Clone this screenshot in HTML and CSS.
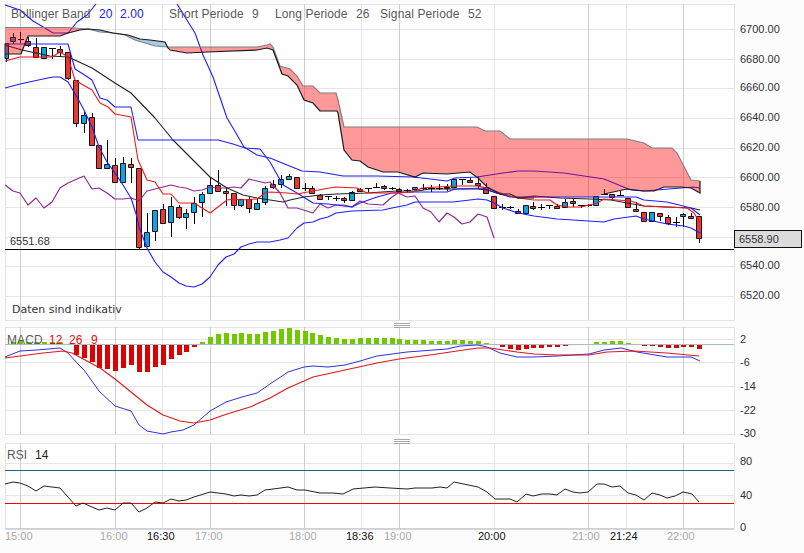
FILE: index.html
```html
<!DOCTYPE html>
<html lang="de">
<head>
<meta charset="utf-8">
<title>Chart</title>
<link rel="stylesheet" href="styles.css">
</head>
<body>
<div class="chart">
  <svg class="pane" width="804" height="322" viewBox="0 0 804 322">
    <rect class="plot" x="5.5" y="4.5" width="729" height="316"/>
    <path class="grid" d="M5 29.5H734M5 59.5H734M5 88.5H734M5 118.5H734M5 148.5H734M5 177.5H734M5 207.5H734M5 237.5H734M5 266.5H734M5 296.5H734M162.5 4V320M361.5 4V320M494.5 4V320M626.5 4V320"/>
    <path class="grid-major" d="M20.5 4V320M115.5 4V320M210.5 4V320M304.5 4V320M399.5 4V320M588.5 4V320M683.5 4V320"/>
    <path class="baseline" d="M5 249.5H734"/>

    <path class="wick" d="M6.5 43V62M13.5 33V44M20.5 32V43M18 39.5h6M28.5 37V47M36.5 38V58M44.5 47V59M52.5 48V59M49 48.5h7M60.5 46V57M68.5 52V80M76.5 80V127M84.5 112V133M92.5 113V145M107.5 140V168M115.5 158V182M123.5 157V182M131.5 158V183M139.5 168V249M147.5 213V247M155.5 210V241M163.5 204V224M171.5 197V237M179.5 205V219M186.5 209V229M194.5 197V224M202.5 192V217M210.5 178V194M218.5 170V192M226.5 187V206M234.5 193V210M241.5 199V207M249.5 197V213M257.5 198V210M265.5 186V205M273.5 180V189M281.5 175V188M289.5 174V180M305.5 183V191M302 188.5h7M312.5 186V193M320.5 194V200M328.5 196V200M325 196.5h7M336.5 196V201M333 198.5h7M344.5 197V203M352.5 191V200M360.5 188V192M368.5 188V192M365 188.5h7M376.5 183V188M373 187.5h7M384.5 185V190M392.5 187V190M389 188.5h7M399.5 188V192M407.5 189V192M404 190.5h7M423.5 184V190M420 188.5h7M431.5 185V192M428 188.5h7M439.5 184V190M436 188.5h7M447.5 184V191M462.5 179V185M459 179.5h7M470.5 178V183M478.5 177V189M486.5 183V193M502.5 204V210M499 207.5h7M510.5 206V209M507 207.5h7M518.5 209V214M533.5 202V210M541.5 204V210M538 207.5h7M549.5 205V209M546 205.5h7M557.5 204V208M565.5 199V207M573.5 199V207M581.5 205V208M578 205.5h7M588.5 204V207M585 205.5h7M604.5 189V195M601 194.5h7M612.5 194V200M620.5 191V196M617 195.5h7M628.5 198V208M636.5 202V212M652.5 212V222M660.5 213V221M668.5 215V225M676.5 217V227M673 222.5h7M683.5 213V227M691.5 213V218M699.5 216V243"/>
    <path class="body-down" d="M25.5 41.5h5v4h-5zM33.5 47.5h5v10h-5zM57.5 49.5h5v3h-5zM65.5 52.5h5v26h-5zM73.5 80.5h5v43h-5zM89.5 117.5h5v28h-5zM96.5 145.5h5v23h-5zM112.5 165.5h5v17h-5zM128.5 164.5h5v3h-5zM136.5 168.5h5v79h-5zM160.5 209.5h5v14h-5zM176.5 207.5h5v10h-5zM215.5 185.5h5v6h-5zM223.5 191.5h5v2h-5zM231.5 193.5h5v12h-5zM246.5 199.5h5v9h-5zM270.5 184.5h5v3h-5zM294.5 177.5h5v11h-5zM309.5 188.5h5v5h-5zM317.5 195.5h5v4h-5zM341.5 198.5h5v2h-5zM357.5 189.5h5v2h-5zM381.5 186.5h5v2h-5zM396.5 189.5h5v2h-5zM444.5 187.5h5v1h-5zM467.5 180.5h5v2h-5zM475.5 183.5h5v2h-5zM483.5 187.5h5v6h-5zM491.5 196.5h5v12h-5zM515.5 211.5h5v2h-5zM530.5 206.5h5v2h-5zM554.5 206.5h5v2h-5zM570.5 201.5h5v2h-5zM609.5 194.5h5v3h-5zM625.5 198.5h5v9h-5zM633.5 209.5h5v2h-5zM641.5 212.5h5v9h-5zM657.5 213.5h5v3h-5zM665.5 217.5h5v6h-5zM688.5 216.5h5v2h-5zM696.5 216.5h5v22h-5z"/>
    <path class="body-up" d="M5 43.5h3.5v15H5zM10.5 37.5h5v4h-5zM41.5 47.5h5v11h-5zM81.5 115.5h5v8h-5zM104.5 164.5h5v4h-5zM120.5 163.5h5v19h-5zM144.5 232.5h5v14h-5zM152.5 210.5h5v21h-5zM168.5 206.5h5v16h-5zM183.5 213.5h5v4h-5zM191.5 203.5h5v9h-5zM199.5 194.5h5v8h-5zM207.5 185.5h5v8h-5zM238.5 199.5h5v6h-5zM254.5 203.5h5v6h-5zM262.5 188.5h5v14h-5zM278.5 179.5h5v5h-5zM286.5 176.5h5v3h-5zM349.5 192.5h5v8h-5zM412.5 187.5h5v2h-5zM451.5 179.5h5v8h-5zM523.5 205.5h5v8h-5zM562.5 202.5h5v5h-5zM593.5 196.5h5v9h-5zM649.5 212.5h5v9h-5zM680.5 214.5h5v2h-5z"/>

    <polyline class="line-purple" points="5,185 13,191 20,193 28,205 36,198 44,208 52,202 60,188 68,183 77,179 84,176 92,189 99,188 107,193 115,199 123,199 131,198 139,201 147,191 155,189 163,187 171,185 179,187 186,188 194,191 202,190 210,187 218,188 226,188 234,187 241,188 249,179 257,181 265,183 270,182 280,193 288,208 297,208 313,213 320,204 328,208 336,205 344,205 352,207 360,201 368,204 383,205 392,197 398,193 407,197 415,196 423,208 431,212 439,222 447,213 454,217 462,224 470,222 478,214 487,217 494,238"/>
    <polyline class="line-black" points="5,45 22,50 50,56 68,57 77,61 92,68 115,83 131,93 155,118 173,140 193,160 210,177 227,188 243,195 257,198 270,200 283,202 290,200 304,197 320,195 337,194 367,193 397,191 417,191 430,189 477,189 487,190 500,194 518,198 534,196 560,198 590,199 611,200 627,203 644,206 667,207 691,208 700,210"/>
    <polyline class="line-blue" points="5,5 20,10 33,21 45,28 53,33 68,33 77,22 87,15 96,4"/>
    <polyline class="line-blue" points="177,4 195,33 203,55 213,77 227,118 233,128 244,147 257,155 270,158 287,165 302,171 320,172 343,176 377,176 413,177 447,181 455,178 477,177 503,173 518,171 534,171 564,173 604,179 631,190 644,191 681,188 694,187 700,188"/>
    <polyline class="line-blue" points="5,88 20,84 43,79 53,77 60,77 68,82 77,97 84,110 92,127 99,147 107,162 115,173 123,185 131,198 137,217 139,227 147,248 155,262 163,272 171,277 179,283 186,286 194,287 202,284 210,277 218,265 226,257 234,254 241,247 249,244 257,242 270,242 280,240 288,238 297,228 304,223 313,222 320,219 328,217 336,213 352,211 383,210 392,208 407,205 415,202 453,202 478,199 487,200 494,203 503,208 518,213 534,216 557,219 604,222 614,219 636,216 644,219 667,224 684,226 691,228 700,233"/>
    <polyline class="line-blue" points="5,44 68,44 75,69 83,74 92,80 100,98 107,100 115,107 131,107 138,140 218,140 233,144 245,148 260,149 270,162 283,185 297,193 313,203 328,204 352,207 360,203 377,197 392,193 413,192 447,192 455,189 483,188 494,192 510,197 534,197 594,197 636,197 644,200 667,202 691,208 700,215"/>
    <polyline class="line-red" points="5,61 20,57 52,57 60,52 68,57 75,80 83,85 92,90 100,103 108,107 115,114 131,117 138,160 147,180 155,182 163,194 171,194 179,203 194,203 210,213 218,207 227,200 234,199 241,200 257,199 265,193 270,192 287,193 297,194 313,191 335,187 357,188 367,193 398,193 413,192 422,188 453,186 478,186 487,188 503,194 518,198 534,200 550,200 557,205 567,207 581,207 597,203 604,199 617,200 631,201 644,206 667,207 687,208 694,213 700,223"/>

    <path class="cloud-red" d="M5 27.5H68L88 29L80 30L68 33L60 36H28L21 54H5Z"/>
    <path class="cloud-blue" d="M88 29L100 30L113 33L128 35L140 39L150 40L165 42L168 47L155 46L145 43L135 40L125 35L113 33L100 32Z"/>
    <path class="cloud-red" d="M168 47H257L267 45L270 44L273 47L280 66L290 69L297 76L303 86H313L320 93H336L338 100L344 127H477L485 131H500L510 139H627L644 143L652 148H672L677 153L691 180L700 181V193L691 188L681 187H664L654 191H644L627 189L604 194L596 197L560 197L534 198H518L510 194H500L487 187L478 178L470 172L447 174L423 173L415 177L398 172H383L368 167L360 161L352 160L344 150L338 113L337 111H320L313 103L304 100L297 85L288 76L282 74L273 50L270 49L267 48L257 50L207 52L187 53L170 50Z"/>
    <path class="edge-top" d="M5 27.5H68L88 29L100 32L113 33L125 35L135 40L145 43L155 46L168 47H257L267 45L270 44L273 47L280 66L290 69L297 76L303 86H313L320 93H336L338 100L344 127H477L485 131H500L510 139H627L644 143L652 148H672L677 153L691 180L700 181"/>
    <path class="edge-bottom" d="M5 54H21L28 36H60L68 33L80 30L88 29L100 30L113 33L128 35L140 39L150 40L165 42L168 48L170 50L187 53L207 52L257 50L267 48L270 49L273 50L282 74L288 76L297 85L304 100L313 103L320 111H337L338 113L344 150L352 160L360 161L368 167L383 172H398L415 177L423 173L447 174L470 172L478 178L487 187L500 194H510L518 198H534M604 194L627 189L644 191H654L664 187H681L691 188L700 193V181"/>

    <text class="label" x="11" y="18">Bollinger Band</text>
    <text class="label num-blue" x="99" y="18">20</text>
    <text class="label num-blue" x="120" y="18">2.00</text>
    <text class="label" x="169" y="18">Short Periode</text>
    <text class="label" x="252" y="18">9</text>
    <text class="label" x="275" y="18">Long Periode</text>
    <text class="label" x="356" y="18">26</text>
    <text class="label" x="380" y="18">Signal Periode</text>
    <text class="label" x="468" y="18">52</text>

    <text class="axis" x="740" y="33">6700.00</text>
    <text class="axis" x="740" y="63">6680.00</text>
    <text class="axis" x="740" y="91">6660.00</text>
    <text class="axis" x="740" y="121">6640.00</text>
    <text class="axis" x="740" y="151">6620.00</text>
    <text class="axis" x="740" y="181">6600.00</text>
    <text class="axis" x="740" y="211">6580.00</text>
    <text class="axis" x="740" y="269">6540.00</text>
    <text class="axis" x="740" y="299">6520.00</text>
    <text class="axis" x="10" y="245">6551.68</text>
    <rect class="price-box" x="734.5" y="230.5" width="67" height="17"/>
    <text class="axis" x="739" y="243">6558.90</text>
    <text class="notice" x="12" y="313">Daten sind indikativ</text>
  </svg>

  <div class="grip-row"><div class="grip"></div></div>

  <svg class="pane" width="804" height="111" viewBox="0 327 804 111">
    <rect class="plot" x="5.5" y="327.5" width="729" height="107"/>
    <path class="grid" d="M5 339.5H734M5 362.5H734M5 386.5H734M5 410.5H734M162.5 327V434M361.5 327V434M494.5 327V434M626.5 327V434"/>
    <path class="grid-major" d="M20.5 327V434M115.5 327V434M210.5 327V434M304.5 327V434M399.5 327V434M588.5 327V434M683.5 327V434"/>
    <path class="hist-up" d="M11 342h5v2h-5zM18 341h5v3h-5zM26 342h5v2h-5zM34 342h5v2h-5zM42 342h5v2h-5zM50 342h5v2h-5zM58 342h5v2h-5zM200 342h5v2h-5zM208 337h5v7h-5zM216 334h5v10h-5zM224 333h5v11h-5zM232 334h5v10h-5zM239 333h5v11h-5zM247 334h5v10h-5zM255 334h5v10h-5zM263 332h5v12h-5zM271 331h5v13h-5zM279 329h5v15h-5zM287 328h5v16h-5zM295 330h5v14h-5zM303 331h5v13h-5zM310 333h5v11h-5zM318 335h5v9h-5zM326 337h5v7h-5zM334 338h5v6h-5zM342 339h5v5h-5zM350 339h5v5h-5zM358 338h5v6h-5zM366 338h5v6h-5zM374 338h5v6h-5zM382 338h5v6h-5zM390 338h5v6h-5zM397 339h5v5h-5zM405 340h5v4h-5zM413 340h5v4h-5zM421 340h5v4h-5zM429 341h5v3h-5zM437 341h5v3h-5zM445 341h5v3h-5zM452 340h5v4h-5zM460 340h5v4h-5zM468 341h5v3h-5zM476 341h5v3h-5zM484 343h5v1h-5zM594 342h5v2h-5zM602 342h5v2h-5zM610 341h5v3h-5zM618 341h5v3h-5zM626 343h5v1h-5z"/>
    <path class="hist-down" d="M66 344h5v1h-5zM74 344h5v11h-5zM82 344h5v14h-5zM90 344h5v18h-5zM97 344h5v24h-5zM105 344h5v25h-5zM113 344h5v27h-5zM121 344h5v24h-5zM129 344h5v21h-5zM137 344h5v28h-5zM145 344h5v28h-5zM153 344h5v23h-5zM161 344h5v21h-5zM169 344h5v15h-5zM177 344h5v11h-5zM184 344h5v8h-5zM192 344h5v3h-5zM492 344h5v1h-5zM500 344h5v3h-5zM508 344h5v5h-5zM516 344h5v6h-5zM524 344h5v5h-5zM531 344h5v4h-5zM539 344h5v4h-5zM547 344h5v3h-5zM555 344h5v3h-5zM563 344h5v2h-5zM642 344h5v2h-5zM650 344h5v2h-5zM658 344h5v3h-5zM666 344h5v4h-5zM674 344h5v4h-5zM681 344h5v3h-5zM689 344h5v3h-5zM697 344h5v5h-5z"/>
    <path class="zero" d="M5 344.5H734"/>
    <polyline class="line-blue-thin" points="5,357 20,351 37,350 60,348 68,353 77,363 84,370 99,391 115,406 131,411 139,425 147,431 163,434 171,432 183,430 194,425 210,411 226,402 242,397 257,393 270,384 288,372 304,367 313,366 328,367 345,365 360,361 377,356 392,354 407,352 447,349 460,346 478,345 487,347 500,353 517,357 534,357 557,356 589,354 604,350 621,348 637,352 667,357 691,357 700,361"/>
    <polyline class="line-red-thin" points="5,358 43,353 63,351 72,353 87,361 100,368 115,379 131,392 147,405 163,415 180,421 194,423 210,420 227,414 250,407 270,398 288,388 304,381 313,377 345,370 377,363 399,359 430,355 457,351 478,348 490,348 517,352 534,354 557,355 589,355 607,352 634,351 667,353 699,356"/>
    <text class="label" x="7" y="344">MACD</text>
    <text class="label num-red" x="49" y="344">12</text>
    <text class="label num-red" x="69" y="344">26</text>
    <text class="label num-red" x="91" y="344">9</text>
    <text class="axis" x="740" y="343">2</text>
    <text class="axis" x="740" y="366">-6</text>
    <text class="axis" x="740" y="390">-14</text>
    <text class="axis" x="740" y="414">-22</text>
    <text class="axis" x="740" y="437">-30</text>
  </svg>

  <div class="grip-row"><div class="grip"></div></div>

  <svg class="pane" width="804" height="110" viewBox="0 443 804 110">
    <rect class="plot" x="5.5" y="443.5" width="729" height="85"/>
    <path class="grid" d="M5 463.5H734M5 495.5H734M162.5 443V529M361.5 443V529M494.5 443V529M626.5 443V529"/>
    <path class="grid-major" d="M20.5 443V529M115.5 443V529M210.5 443V529M304.5 443V529M399.5 443V529M588.5 443V529M683.5 443V529"/>
    <path class="rsi-high" d="M5 470.5H734"/>
    <path class="rsi-low" d="M5 503.5H734"/>
    <path class="rsi-floor" d="M5 529H734"/>
    <polyline class="line-rsi" points="5,484 13,482 20,483 28,486 36,491 44,486 60,488 68,497 76,506 83,503 92,507 99,510 107,508 115,510 123,503 131,503 139,512 147,508 155,502 163,503 171,499 179,501 186,500 194,497 210,492 226,494 234,496 241,495 249,496 257,495 265,490 273,489 288,487 297,490 305,490 320,493 333,493 343,494 353,489 375,487 390,488 407,489 415,488 432,488 440,487 447,488 454,482 478,487 487,492 495,499 510,499 517,502 526,494 533,496 542,494 550,494 557,495 565,489 573,492 580,493 588,492 597,484 604,484 612,487 620,486 628,493 636,495 644,500 652,493 660,495 667,498 675,496 683,492 692,494 699,502"/>
    <text class="label" x="7" y="459">RSI</text>
    <text class="label num-dark" x="35" y="459">14</text>
    <text class="axis" x="740" y="465">80</text>
    <text class="axis" x="740" y="499">40</text>
    <text class="axis" x="740" y="531">0</text>
    <text class="time" x="5" y="540">15:00</text>
    <text class="time" x="100" y="540">16:00</text>
    <text class="time time-mark" x="147" y="540">16:30</text>
    <text class="time" x="195" y="540">17:00</text>
    <text class="time" x="289" y="540">18:00</text>
    <text class="time time-mark" x="346" y="540">18:36</text>
    <text class="time" x="384" y="540">19:00</text>
    <text class="time time-mark" x="478" y="540">20:00</text>
    <text class="time" x="572" y="540">21:00</text>
    <text class="time time-mark" x="610" y="540">21:24</text>
    <text class="time" x="667" y="540">22:00</text>
  </svg>
</div>
</body>
</html>
```

FILE: styles.css
```css
html, body {
  margin: 0;
  padding: 0;
  background: #fcfcfc;
}

.chart {
  display: flex;
  flex-direction: column;
  width: 804px;
  height: 553px;
  overflow: hidden;
  font-family: "Liberation Sans", Arial, sans-serif;
}

.pane {
  display: block;
  flex: none;
}

.grip-row {
  position: relative;
  display: flex;
  justify-content: center;
  flex: none;
  height: 5px;
}
.grip {
  width: 16px;
  height: 5px;
  margin-top: 1px;
  background: repeating-linear-gradient(to bottom, #a8a8a8 0, #a8a8a8 1px, transparent 1px, transparent 2px);
}

.plot { fill: #fff; stroke: #e4e4e4; stroke-width: 1; }
.grid { fill: none; stroke: #e6e6e6; stroke-width: 1; }
.grid-major { fill: none; stroke: #cfcfcf; stroke-width: 1; }
.baseline { fill: none; stroke: #000; stroke-width: 1; }

.wick { fill: none; stroke: #000; stroke-width: 1; }
.body-down { fill: #e8382f; stroke: #111; stroke-width: 1; }
.body-up { fill: #08a5e4; stroke: #111; stroke-width: 1; }

polyline { fill: none; stroke-linejoin: round; }
.line-purple { stroke: #8f2a92; stroke-width: 1.2; }
.line-black { stroke: #222; stroke-width: 1.1; }
.line-blue { stroke: #1f1fff; stroke-width: 1.1; }
.line-red { stroke: #f01818; stroke-width: 1.1; }
.line-blue-thin { stroke: #2f2fe8; stroke-width: 1; }
.line-red-thin { stroke: #e01818; stroke-width: 1.1; }
.line-rsi { stroke: #222; stroke-width: 1; }

.cloud-red { fill: #f00; fill-opacity: .4; }
.cloud-blue { fill: #a6cbe6; }
.edge-top { fill: none; stroke: #808080; stroke-width: 1.2; }
.edge-bottom { fill: none; stroke: #1a1a1a; stroke-width: 1.2; }

.hist-up { fill: #6fc800; }
.hist-down { fill: #dc0000; }
.zero { fill: none; stroke: #a9bdc9; stroke-width: 1; }

.rsi-high { fill: none; stroke: #1f6283; stroke-width: 1; }
.rsi-low { fill: none; stroke: #f00; stroke-width: 1; }
.rsi-floor { fill: none; stroke: #c4ccd4; stroke-width: 1.5; }

.price-box { fill: #dcdcdc; stroke: #111; stroke-width: 1; }

.label {
  font-size: 12px;
  fill: #5a5a5a;
  letter-spacing: .1px;
}
.num-blue { fill: #1a1ae6; }
.num-red { fill: #d81010; }
.num-dark { fill: #222; }

.axis {
  font-size: 11px;
  fill: #333;
}
.notice {
  font-family: "DejaVu Sans", Verdana, sans-serif;
  font-size: 11px;
  fill: #333;
}
.time {
  font-size: 11px;
  fill: #aaa;
}
.time-mark { fill: #111; }
```
